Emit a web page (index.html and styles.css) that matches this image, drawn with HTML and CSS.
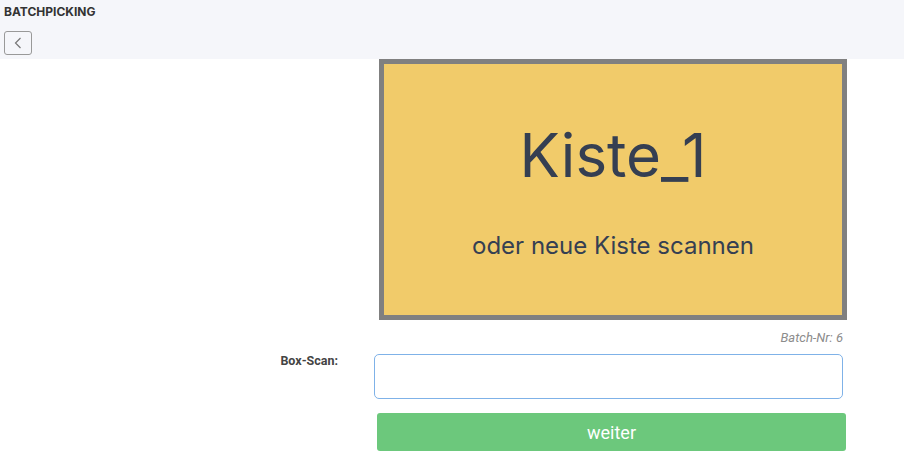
FILE: index.html
```html
<!DOCTYPE html>
<html lang="de">
<head>
    <meta charset="UTF-8">
    <meta name="viewport" content="width=device-width, initial-scale=1.0">
    <title>Batchpicking</title>
    <link rel="stylesheet" href="styles.css">
</head>
<body>
    <div class="top">
        <h1>BATCHPICKING</h1>
        <button class="back" title="Zurück">
            <svg width="8" height="12" viewBox="0 0 8 12"><path d="M6.5 1 L1.5 6 L6.5 11" fill="none" stroke="#777" stroke-width="1.2"/></svg>
        </button>
    </div>

    <div class="main">
        <div></div>
        <div class="kiste">
            <h2>Kiste_1</h2>
            <p>oder neue Kiste scannen</p>
        </div>

        <div></div>
        <div class="batch">Batch-Nr: 6</div>

        <label for="scan">Box-Scan:</label>
        <input type="text" name="scan" id="scan">

        <div></div>
        <button id="weiter">weiter</button>
    </div>
</body>
</html>
```

FILE: styles.css
```css
body{
    margin: 0;
    font-family: Inter, sans-serif;
    background-color: #fff;
}

.top{
    background-color: #f5f6fa;
    height: 59px;
    padding: 0 4px;
    box-sizing: border-box;
}

.top h1{
    margin: 0;
    padding-top: 5px;
    font-size: 12px;
    font-weight: 700;
    line-height: 14px;
    color: #333;
}

.back{
    margin-top: 12px;
    width: 28px;
    height: 24px;
    padding: 0;
    border: 1px solid #999;
    border-radius: 3px;
    background: transparent;
    display: flex;
    align-items: center;
    justify-content: center;
    cursor: pointer;
}

.main{
    display: grid;
    grid-template-columns: 374px 473px;
}

.kiste{
    margin-left: 5px;
    width: 468px;
    height: 261px;
    box-sizing: border-box;
    border: 5px solid #808080;
    background-color: #f1cb6a;
    color: #353f52;
    display: flex;
    flex-direction: column;
    justify-content: center;
    align-items: center;
    gap: 40px;
}

.kiste h2{
    margin: 0;
    font-size: 60px;
    font-weight: 400;
    line-height: 72px;
}

.kiste p{
    margin: 0;
    font-size: 24px;
    line-height: 29px;
}

.batch{
    font-family: Roboto, sans-serif;
    font-style: italic;
    font-size: 13px;
    color: #8c8c8c;
    text-align: right;
    padding: 10px 4px 0 0;
    height: 23px;
    box-sizing: border-box;
}

label{
    font-family: Roboto, sans-serif;
    font-weight: 700;
    font-size: 12.5px;
    color: #444;
    text-align: right;
    padding: 10px 36px 0 0;
}

#scan{
    width: 469px;
    height: 45px;
    box-sizing: border-box;
    margin-top: 11px;
    border: 1px solid #7fb2e8;
    border-radius: 5px;
    font-size: 16px;
}

#scan:focus{
    outline: none;
}

#weiter{
    margin: 14px 0 0 3px;
    width: 469px;
    height: 38px;
    border: none;
    border-radius: 3px;
    background-color: #6cc87c;
    color: #fff;
    font-family: Roboto, sans-serif;
    font-size: 18px;
    cursor: pointer;
}
```
